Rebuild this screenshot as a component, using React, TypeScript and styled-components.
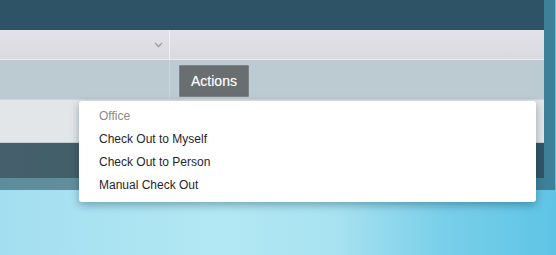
import React from "react";
import styled, { createGlobalStyle } from "styled-components";

const Global = createGlobalStyle`
  html, body { margin: 0; padding: 0; }
  body {
    width: 556px;
    height: 255px;
    overflow: hidden;
    font-family: "Liberation Sans", Arial, sans-serif;
    background: linear-gradient(90deg, #a3def0 0%, #b2e8f3 40%, #a8e2f1 60%, #78cfe9 80%, #5ec4e6 100%);
  }
`;

const Stage = styled.div`
  position: relative;
  width: 556px;
  height: 255px;
`;

const Frame = styled.div`
  width: 555px;
  box-sizing: border-box;
  padding: 0 11px 12px 0;
  background: rgba(33, 65, 78, 0.52);
`;

const Window = styled.div`
  display: flex;
  flex-direction: column;
`;

const TitleBar = styled.div`
  height: 30px;
  background: #2e5366;
`;

const HeaderRow = styled.div`
  height: 30px;
  display: grid;
  grid-template-columns: 170px 1fr;
  background: linear-gradient(180deg, #e2e2e7 0%, #d9dae0 100%);
  border-bottom: 1px solid #eceef0;
  box-sizing: border-box;
`;

const HeaderCell = styled.div<{ $divider?: boolean }>`
  display: flex;
  align-items: center;
  justify-content: flex-end;
  padding-right: 6px;
  border-right: ${(p) => (p.$divider ? "1px solid #f1f1f4" : "none")};
`;

const ActionRow = styled.div`
  height: 40px;
  display: grid;
  grid-template-columns: 170px 1fr;
  background: #bccbd1;
  border-bottom: 1px solid #cdd7db;
  box-sizing: border-box;
`;

const ActionCell = styled.div<{ $divider?: boolean }>`
  display: flex;
  align-items: flex-start;
  padding: 5px 0 0 9px;
  border-right: ${(p) => (p.$divider ? "1px solid #cad6da" : "none")};
`;

const ActionsButton = styled.button`
  width: 70px;
  height: 32px;
  background: #696e70;
  border: 1px solid #7d8385;
  border-radius: 1px;
  color: #fff;
  font-family: "Liberation Sans", Arial, sans-serif;
  font-size: 14px;
  padding: 0;
  text-shadow: 0 0 1px rgba(255, 255, 255, 0.4);
`;

const BlankRow = styled.div`
  height: 43px;
  background: #e2e6e8;
  border-bottom: 1px solid #c7cdd0;
  box-sizing: border-box;
`;

const Footer = styled.div`
  height: 35px;
  background: linear-gradient(90deg, #45606b 0%, #3d5c69 50%, #2f5566 100%);
`;

const Menu = styled.ul`
  position: absolute;
  left: 79px;
  top: 101px;
  width: 457px;
  height: 101px;
  margin: 0;
  padding: 4px 0 0;
  box-sizing: border-box;
  list-style: none;
  background: #fff;
  border-radius: 3px;
  box-shadow: 0 3px 9px rgba(0, 40, 60, 0.35);
`;

const MenuItem = styled.li<{ $heading?: boolean }>`
  height: 23px;
  line-height: 23px;
  padding-left: 20px;
  font-size: 12px;
  color: ${(p) => (p.$heading ? "#8a8a8a" : "#1f1f2e")};
`;

const Chevron = () => (
  <svg width="9" height="6" viewBox="0 0 9 6">
    <path d="M1 1 L4.5 4.5 L8 1" fill="none" stroke="#9a9ba3" strokeWidth="1.3" />
  </svg>
);

export default function App() {
  return (
    <>
      <Global />
      <Stage>
        <Frame>
          <Window>
            <TitleBar />
            <HeaderRow>
              <HeaderCell $divider>
                <Chevron />
              </HeaderCell>
              <HeaderCell />
            </HeaderRow>
            <ActionRow>
              <ActionCell $divider />
              <ActionCell>
                <ActionsButton>Actions</ActionsButton>
              </ActionCell>
            </ActionRow>
            <BlankRow />
            <Footer />
          </Window>
        </Frame>
        <Menu>
          <MenuItem $heading>Office</MenuItem>
          <MenuItem>Check Out to Myself</MenuItem>
          <MenuItem>Check Out to Person</MenuItem>
          <MenuItem>Manual Check Out</MenuItem>
        </Menu>
      </Stage>
    </>
  );
}
